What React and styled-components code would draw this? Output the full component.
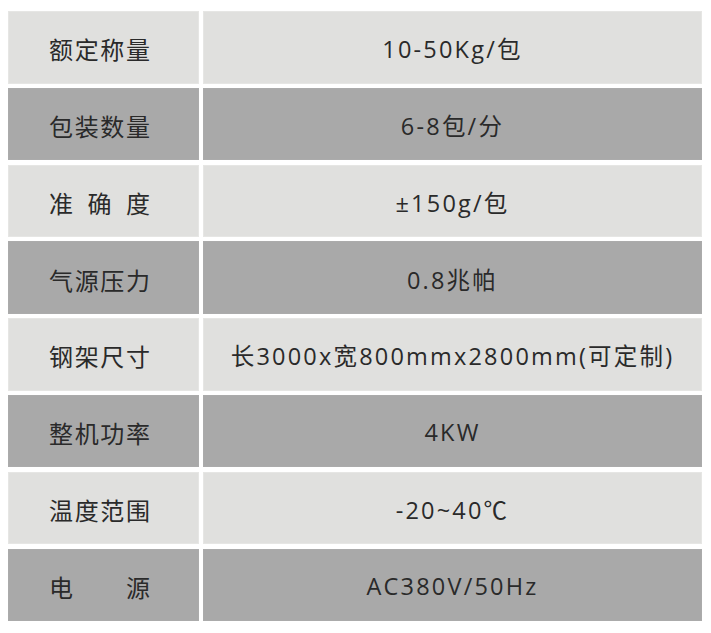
import React from "react";
import styled, { createGlobalStyle } from "styled-components";

const specs = [
  { label: "额定称量", value: "10-50Kg/包" },
  { label: "包装数量", value: "6-8包/分" },
  { label: "准确度", value: "±150g/包" },
  { label: "气源压力", value: "0.8兆帕" },
  { label: "钢架尺寸", value: "长3000x宽800mmx2800mm(可定制)" },
  { label: "整机功率", value: "4KW" },
  { label: "温度范围", value: "-20~40℃" },
  { label: "电源", value: "AC380V/50Hz" },
];

const GlobalStyle = createGlobalStyle`
  body {
    margin: 0;
    background: #ffffff;
  }
`;

const App = () => {
  return (
    <>
      <GlobalStyle />
      <Table>
        {specs.map((item, i) => (
          <Row key={i}>
            <LabelCell dark={i % 2 === 1}>
              <Label>
                {item.label.split("").map((ch, j) => (
                  <span key={j}>{ch}</span>
                ))}
              </Label>
            </LabelCell>
            <ValueCell dark={i % 2 === 1}>{item.value}</ValueCell>
          </Row>
        ))}
      </Table>
    </>
  );
};

const Table = styled.div`
  display: flex;
  flex-direction: column;
  gap: 4.3px;
  padding: 11px 9px 0 8px;
  font-family: "Open Sans", "Noto Sans CJK SC", sans-serif;
  color: #2a2a2a;
`;

const Row = styled.div`
  display: grid;
  grid-template-columns: 191px 1fr;
  gap: 4px;
  height: 72.5px;
`;

const Cell = styled.div`
  display: flex;
  align-items: center;
  justify-content: center;
  background: ${(p) => (p.dark ? "#a9a9a9" : "#e0e0de")};
  box-shadow: inset 0 0 0 1px
    ${(p) => (p.dark ? "#ababab" : "#e6e6e4")};
`;

const LabelCell = styled(Cell)`
  padding: 3px 8px 0 0;
`;

const Label = styled.div`
  width: 101px;
  display: flex;
  justify-content: space-between;
  font-family: "Noto Sans CJK SC", sans-serif;
  font-size: 24px;
`;

const ValueCell = styled(Cell)`
  padding-top: 2px;
  font-size: 23.5px;
  letter-spacing: 2.2px;
`;

export default App;
